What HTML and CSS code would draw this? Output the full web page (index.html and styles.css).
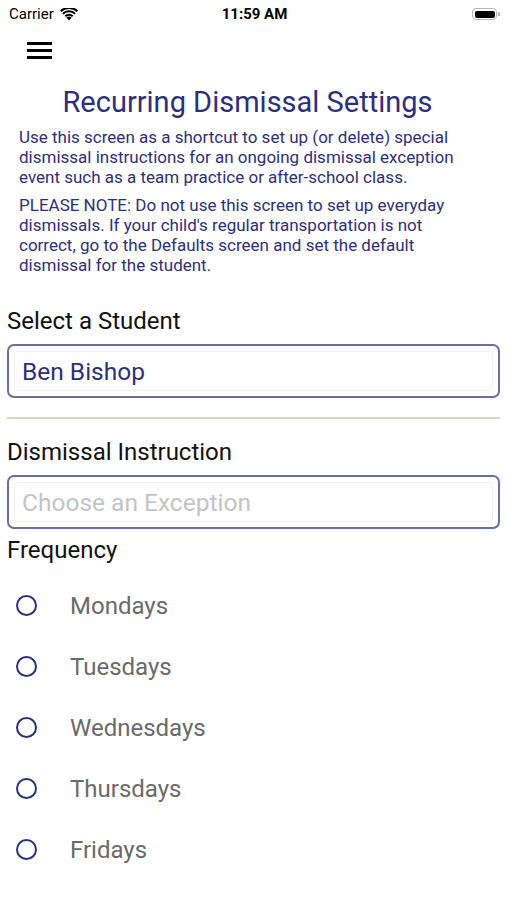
FILE: index.html
```html
<!DOCTYPE html>
<html lang="en">

<head>
    <meta charset="UTF-8">
    <meta name="viewport" content="width=device-width, initial-scale=1.0">
    <title>Recurring Dismissal Settings</title>
    <link rel="stylesheet" href="styles.css">
</head>

<body>

    <div class="status-bar">
        <div class="carrier">
            Carrier
            <svg class="wifi" width="18" height="13" viewBox="0 0 18 13">
                <path d="M9 12.5 L6.4 9.6 A3.8 3.8 0 0 1 11.6 9.6 Z" fill="#000" />
                <path d="M4.6 7.6 A6.4 6.4 0 0 1 13.4 7.6 L12 9.1 A4.4 4.4 0 0 0 6 9.1 Z" fill="#000" />
                <path d="M2.2 5 A9.8 9.8 0 0 1 15.8 5 L14.4 6.5 A7.8 7.8 0 0 0 3.6 6.5 Z" fill="#000" />
                <path d="M0 2.5 A13 13 0 0 1 18 2.5 L16.6 4 A11 11 0 0 0 1.4 4 Z" fill="#000" />
            </svg>
        </div>
        <div class="time">11:59 AM</div>
        <div class="battery">
            <span class="battery-body"><span class="battery-fill"></span></span>
            <span class="battery-cap"></span>
        </div>
    </div>

    <div class="menu-button">
        <span></span>
        <span></span>
        <span></span>
    </div>

    <div class="container">
        <h2>Recurring Dismissal Settings</h2>
        <p class="intro">Use this screen as a shortcut to set up (or delete) special dismissal instructions for an ongoing dismissal exception event such as a team practice or after-school class.</p>
        <p class="intro">PLEASE NOTE: Do not use this screen to set up everyday dismissals. If your child's regular transportation is not correct, go to the Defaults screen and set the default dismissal for the student.</p>

        <form id="recurringForm">
            <label class="field-label" for="student">Select a Student</label>
            <div class="select-box">
                <input type="text" id="student" name="student" value="Ben Bishop" readonly>
            </div>

            <hr class="divider">

            <label class="field-label" for="instruction">Dismissal Instruction</label>
            <div class="select-box">
                <input type="text" id="instruction" name="instruction" placeholder="Choose an Exception" readonly>
            </div>

            <div class="field-label freq-label">Frequency</div>

            <div class="days">
                <label class="day"><span class="radio"></span>Mondays</label>
                <label class="day"><span class="radio"></span>Tuesdays</label>
                <label class="day"><span class="radio"></span>Wednesdays</label>
                <label class="day"><span class="radio"></span>Thursdays</label>
                <label class="day"><span class="radio"></span>Fridays</label>
            </div>
        </form>
    </div>

</body>

</html>
```

FILE: styles.css
```css
body {
    font-family: Roboto, "Noto Sans", sans-serif;
    background-color: #fff;
    margin: 0;
    padding: 0;
    width: 507px;
}

.status-bar {
    height: 28px;
    display: flex;
    align-items: center;
    justify-content: space-between;
    padding: 0 7px 0 9px;
    font-size: 15px;
    color: #000;
}

.carrier {
    display: flex;
    align-items: center;
    gap: 6px;
    width: 120px;
}

.time {
    font-weight: bold;
    text-align: center;
}

.battery {
    width: 120px;
    display: flex;
    justify-content: flex-end;
    align-items: center;
}

.battery-body {
    width: 25px;
    height: 12px;
    border: 1px solid #b5b5b5;
    border-radius: 4px;
    padding: 1.5px;
    box-sizing: border-box;
    display: flex;
}

.battery-fill {
    flex: 1;
    background-color: #000;
    border-radius: 2px;
}

.battery-cap {
    width: 2px;
    height: 4px;
    background-color: #b5b5b5;
    border-radius: 0 1px 1px 0;
    margin-left: 1px;
}

.menu-button {
    margin: 14px 0 0 27px;
    width: 25px;
    display: flex;
    flex-direction: column;
    gap: 4px;
}

.menu-button span {
    height: 3px;
    background-color: #000;
}

.container {
    padding: 0 7px;
}

h2 {
    text-align: center;
    font-size: 29px;
    line-height: 34px;
    font-weight: normal;
    color: #2e2f7c;
    margin: 26px 12px 8px 0;
}

.intro {
    font-size: 17px;
    line-height: 20px;
    color: #2e2f7c;
    margin: 0 20px 8px 12px;
}

.field-label {
    display: block;
    font-size: 24px;
    color: #111;
    margin: 0;
    line-height: 30px;
}

label.field-label:first-child {
    margin-top: 31px;
    margin-bottom: 8px;
}

.select-box {
    border: 2px solid #6d6ca8;
    border-radius: 7px;
    padding: 5px;
}

.select-box input {
    width: 100%;
    height: 40px;
    box-sizing: border-box;
    border: 1px solid #f0f0f0;
    border-radius: 4px;
    padding: 0 7px;
    font-family: Roboto, "Noto Sans", sans-serif;
    font-size: 24.5px;
    color: #2e2f7c;
    outline: none;
}

.select-box input::placeholder {
    color: #c4c4c4;
}

.divider {
    border: none;
    height: 2px;
    background-color: #d6d6cc;
    margin: 19px 0 18px;
}

label[for="instruction"] {
    margin-bottom: 8px;
}

.freq-label {
    margin-top: 6px;
}

.days {
    display: flex;
    flex-direction: column;
    padding-top: 25px;
}

.day {
    display: flex;
    align-items: center;
    height: 61px;
    font-size: 24px;
    color: #6a6a6a;
    margin-top: -15px;
    margin-bottom: 15px;
}

.radio {
    width: 17px;
    height: 17px;
    border: 2.5px solid #2e2f7c;
    border-radius: 50%;
    margin: 0 33px 0 9px;
}
```
